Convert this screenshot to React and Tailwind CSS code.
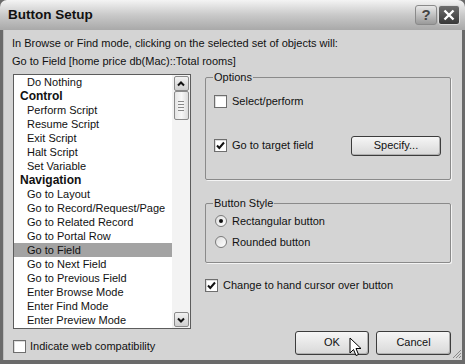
const items = [
  { label: "Do Nothing" },
  { label: "Control", head: true },
  { label: "Perform Script" },
  { label: "Resume Script" },
  { label: "Exit Script" },
  { label: "Halt Script" },
  { label: "Set Variable" },
  { label: "Navigation", head: true },
  { label: "Go to Layout" },
  { label: "Go to Record/Request/Page" },
  { label: "Go to Related Record" },
  { label: "Go to Portal Row" },
  { label: "Go to Field", selected: true },
  { label: "Go to Next Field" },
  { label: "Go to Previous Field" },
  { label: "Enter Browse Mode" },
  { label: "Enter Find Mode" },
  { label: "Enter Preview Mode" },
];

const CheckBox = ({ checked }) => (
  <span className="w-[13px] h-[13px] shrink-0 border border-[#6e6e6e] bg-white flex items-center justify-center shadow-[inset_1px_1px_0_#dcdcdc]">
    {checked && (
      <svg width="9" height="9" viewBox="0 0 9 9">
        <path d="M1 4.5 L3.3 7 L8 1.5" fill="none" stroke="#111" strokeWidth="2" />
      </svg>
    )}
  </span>
);

const Radio = ({ checked }) => (
  <span className="w-[12px] h-[12px] shrink-0 rounded-full border border-[#7a7a7a] bg-gradient-to-br from-[#dedede] to-white flex items-center justify-center">
    {checked && <span className="w-[4px] h-[4px] rounded-full bg-[#111]" />}
  </span>
);

const PushButton = ({ children, className = "" }) => (
  <div
    className={
      "flex items-center justify-center border border-[#3c3c3c] rounded-[3px] bg-gradient-to-b from-[#f6f6f6] to-[#d8d8d8] shadow-[inset_-1px_-1px_0_#b0b0b0] " +
      className
    }
  >
    {children}
  </div>
);

const ScrollBtn = ({ down }) => (
  <div className="w-[15px] h-[15px] rounded-[2px] border border-[#8a8a8a] bg-gradient-to-b from-[#f2f2f2] to-[#cfcfcf] flex items-center justify-center">
    <svg width="8" height="6" viewBox="0 0 8 6">
      <path
        d={down ? "M1 1.5 L4 4.5 L7 1.5" : "M1 4.5 L4 1.5 L7 4.5"}
        fill="none"
        stroke="#111"
        strokeWidth="2"
      />
    </svg>
  </div>
);

export default function App() {
  return (
    <div
      className="relative w-[465px] h-[364px] flex flex-col bg-[#6a6a6a] text-[11px] text-[#111] overflow-hidden"
      style={{ fontFamily: '"Liberation Sans", Arial, sans-serif' }}
    >
      {/* Title bar */}
      <div className="h-[30px] shrink-0 rounded-t-[7px] bg-gradient-to-b from-[#f4f4f4] via-[#c9c9c9] to-[#a9a9a9] flex items-center pl-[8px] pr-[5px]">
        <span className="text-[13.5px] font-bold text-[#111]">Button Setup</span>
        <div className="ml-auto flex gap-[1px]">
          <div className="w-[22px] h-[20px] rounded-[3px] border border-[#8a8a8a] bg-gradient-to-b from-[#e8e8e8] to-[#9a9a9a] flex items-center justify-center text-[15px] font-bold text-[#444]">
            ?
          </div>
          <div className="w-[22px] h-[20px] rounded-[3px] border border-[#dadada] bg-gradient-to-b from-[#6e6e6e] to-[#383838] flex items-center justify-center">
            <svg width="12" height="12" viewBox="0 0 12 12">
              <path d="M1.5 1.5 L10.5 10.5 M10.5 1.5 L1.5 10.5" stroke="#fff" strokeWidth="2.4" />
            </svg>
          </div>
        </div>
      </div>

      {/* Body */}
      <div className="flex-1 mx-[3px] mb-[4px] border-l border-[#bcbcbc] bg-[#d4d4d4] flex flex-col pl-[8px] pr-[11px] pt-[6px]">
        <div className="leading-[14px]">In Browse or Find mode, clicking on the selected set of objects will:</div>
        <div className="leading-[14px] mt-[4px]">Go to Field [home price db(Mac)::Total rooms]</div>

        <div className="flex mt-[6px]">
          {/* Left column */}
          <div className="flex flex-col w-[178px] ml-[1px]">
            <div className="h-[255px] border border-[#5c5c5c] bg-white flex">
              <div className="flex-1 flex flex-col">
                {items.map((it) => (
                  <div
                    key={it.label}
                    className={
                      "h-[14px] leading-[14px] whitespace-nowrap " +
                      (it.head ? "pl-[6px] font-bold text-[12px] " : "pl-[13px] ") +
                      (it.selected ? "bg-[#a3a3a3]" : "")
                    }
                  >
                    {it.label}
                  </div>
                ))}
              </div>
              <div className="w-[18px] bg-[#f3f3f3] flex flex-col items-center py-[1px]">
                <ScrollBtn />
                <div className="w-[15px] h-[29px] rounded-[2px] border border-[#8a8a8a] bg-gradient-to-r from-[#e4e4e4] via-[#f8f8f8] to-[#dcdcdc] flex flex-col items-center justify-center gap-[2px]">
                  <span className="w-[6px] h-px bg-[#888]" />
                  <span className="w-[6px] h-px bg-[#888]" />
                  <span className="w-[6px] h-px bg-[#888]" />
                  <span className="w-[6px] h-px bg-[#888]" />
                </div>
                <div className="flex-1" />
                <ScrollBtn down />
              </div>
            </div>
            <div className="flex items-center gap-[4px] mt-[9px]">
              <CheckBox />
              <span>Indicate web compatibility</span>
            </div>
          </div>

          {/* Right column */}
          <div className="flex-1 flex flex-col ml-[14px] mt-[-3px]">
            <fieldset className="h-[109px] border border-[#8a8a8a] rounded-[2px] px-[8px] shadow-[1px_1px_0_#f4f4f4]">
              <legend className="px-[1px] ml-[-1px] leading-[12px]">Options</legend>
              <div className="flex items-center gap-[5px] mt-[10px]">
                <CheckBox />
                <span>Select/perform</span>
              </div>
              <div className="flex items-center gap-[5px] mt-[26px]">
                <CheckBox checked />
                <span>Go to target field</span>
                <PushButton className="ml-auto mr-[1px] w-[90px] h-[20px]">Specify...</PushButton>
              </div>
            </fieldset>

            <fieldset className="h-[66px] mt-[17px] border border-[#8a8a8a] rounded-[2px] px-[9px] shadow-[1px_1px_0_#f4f4f4]">
              <legend className="px-[1px] ml-[-2px] leading-[12px]">Button Style</legend>
              <div className="flex items-center gap-[5px] mt-[4px]">
                <Radio checked />
                <span>Rectangular button</span>
              </div>
              <div className="flex items-center gap-[5px] mt-[4px]">
                <Radio />
                <span>Rounded button</span>
              </div>
            </fieldset>

            <div className="flex items-center gap-[5px] mt-[14px]">
              <CheckBox checked />
              <span>Change to hand cursor over button</span>
            </div>

            <div className="flex justify-end gap-[7px] mt-[37px]">
              <PushButton className="w-[74px] h-[24px]">OK</PushButton>
              <PushButton className="w-[75px] h-[24px]">Cancel</PushButton>
            </div>
          </div>
        </div>
      </div>

      {/* resize grip */}
      <svg className="absolute right-[3px] bottom-[5px]" width="11" height="11" viewBox="0 0 11 11">
        <path d="M10 2 L2 10 M10 5 L5 10 M10 8 L8 10" stroke="#888" strokeWidth="1" />
      </svg>

      {/* mouse pointer */}
      <svg className="absolute left-[349px] top-[337px]" width="14" height="22" viewBox="0 0 14 22">
        <path
          d="M1 1 L1 16 L4.5 12.5 L7 18.5 L9.5 17.5 L7 11.5 L12 11.5 Z"
          fill="#fff"
          stroke="#000"
          strokeWidth="1"
          strokeLinejoin="round"
        />
      </svg>
    </div>
  );
}
